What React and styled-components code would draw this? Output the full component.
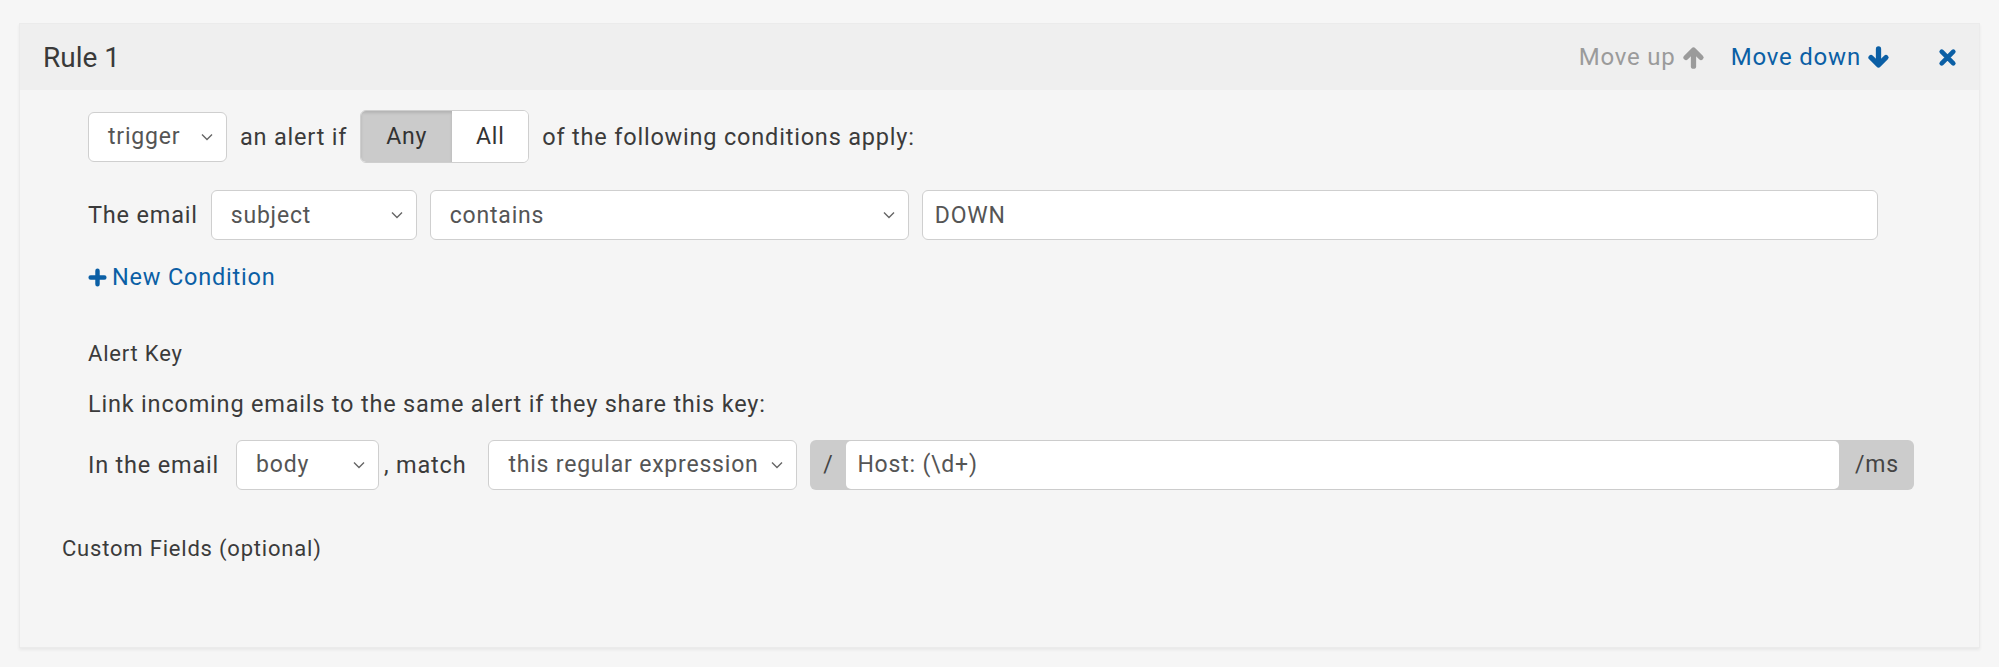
import React from 'react'
import styled, { createGlobalStyle } from 'styled-components'

const GlobalStyle = createGlobalStyle`
    html, body {
        margin: 0;
        padding: 0;
        background: #f6f6f6;
        font-family: Roboto, "Liberation Sans", sans-serif;
        color: #3b3b3b;
        letter-spacing: 0.05em;
    }
`

const Page = styled.div`
    padding: 23px 19px 17px 19px;
`

const Card = styled.div`
    background: #f5f5f5;
    border: 1px solid #ebebeb;
    box-shadow: 0 2px 3px rgba(0, 0, 0, 0.06);
    min-height: 625px;
    box-sizing: border-box;
`

const Header = styled.div`
    display: flex;
    align-items: center;
    height: 66px;
    background: #efefef;
    padding: 0 22px 0 23px;
`

const Title = styled.div`
    flex: 1;
    font-size: 28px;
    letter-spacing: 0;
    color: #3a3a3a;
`

const HeaderAction = styled.a`
    display: flex;
    align-items: center;
    gap: 6px;
    font-size: 24px;
    margin-left: 26px;
    color: ${props => props.disabled ? '#9b9b9b' : '#0b5fa5'};
    cursor: pointer;
    svg {
        width: 23px;
        height: 23px;
    }
`

const CloseButton = styled.a`
    display: flex;
    align-items: center;
    margin-left: 48px;
    color: #0b5fa5;
    svg {
        width: 19px;
        height: 19px;
    }
`

const Body = styled.div`
    padding: 20px 0 0 68px;
    font-size: 23.5px;
`

const Row = styled.div`
    display: flex;
    align-items: center;
    gap: 13px;
    margin: ${props => props.m || '0'};
`

const Text = styled.span`
    margin: ${props => props.m || '0'};
`

const Select = styled.div`
    display: flex;
    align-items: center;
    justify-content: space-between;
    box-sizing: border-box;
    height: 50px;
    width: ${props => props.w}px;
    padding: 0 12px 0 19px;
    background: #fff;
    border: 1px solid #cfcfcf;
    border-radius: 6px;
    color: #555;
    font-size: 23px;
    svg {
        width: 14px;
        height: 14px;
        flex-shrink: 0;
    }
`

const Toggle = styled.div`
    display: flex;
    height: 53px;
    box-sizing: border-box;
    border: 1px solid #cfcfcf;
    border-radius: 6px;
    overflow: hidden;
    background: #fff;
`

const ToggleOption = styled.div`
    display: flex;
    align-items: center;
    justify-content: center;
    width: ${props => props.w}px;
    font-size: 23px;
    color: #333;
    background: ${props => props.active ? '#cbcbcb' : '#fff'};
    box-shadow: ${props => props.active ? 'inset 0 2px 3px rgba(0,0,0,0.12)' : 'none'};
`

const TextInput = styled.div`
    display: flex;
    align-items: center;
    box-sizing: border-box;
    height: 50px;
    width: ${props => props.w}px;
    padding: 0 12px;
    background: #fff;
    border: 1px solid #cfcfcf;
    border-radius: 6px;
    color: #555;
    font-size: 23px;
`

const InputGroup = styled.div`
    display: flex;
    align-items: stretch;
    height: 50px;
    width: 1104px;
    background: #cccccc;
    border-radius: 6px;
    overflow: hidden;
    box-sizing: border-box;
`

const Addon = styled.div`
    display: flex;
    align-items: center;
    justify-content: center;
    width: ${props => props.w}px;
    color: #444;
    font-size: 23px;
`

const GroupInput = styled.div`
    flex: 1;
    display: flex;
    align-items: center;
    margin: 1px 0;
    padding: 0 11px;
    background: #fff;
    border-radius: 5px;
    color: #555;
    font-size: 23px;
`

const AddLink = styled.a`
    display: inline-flex;
    align-items: center;
    gap: 5px;
    color: #0b5fa5;
    font-size: 23.5px;
    cursor: pointer;
    svg {
        width: 19px;
        height: 19px;
    }
`

const Label = styled.div`
    margin: ${props => props.m || '0'};
`

const SubLabel = styled.div`
    font-size: 22px;
    margin: ${props => props.m || '0'};
`

const Chevron = () => (
    <svg viewBox="0 0 14 14" fill="none" stroke="#666" strokeWidth="1.4">
        <path d="M2 4.5 L7 9.5 L12 4.5" />
    </svg>
)

const ArrowIcon = ({ up }) => (
    <svg viewBox="0 0 20 20" fill="none" stroke="currentColor" strokeWidth="4.6"
        strokeLinecap="round" strokeLinejoin="round"
        style={up ? { transform: 'rotate(180deg)' } : undefined}>
        <path d="M10 2.5 L10 15" />
        <path d="M3.5 10 L10 16.5 L16.5 10" />
    </svg>
)

const CrossIcon = () => (
    <svg viewBox="0 0 18 18" fill="none" stroke="currentColor" strokeWidth="4.4" strokeLinecap="round">
        <path d="M3.5 3.5 L14.5 14.5 M14.5 3.5 L3.5 14.5" />
    </svg>
)

const PlusIcon = () => (
    <svg viewBox="0 0 18 18" fill="none" stroke="currentColor" strokeWidth="4.2" strokeLinecap="round">
        <path d="M9 2.5 L9 15.5 M2.5 9 L15.5 9" />
    </svg>
)

function Dropdown({ value, w }) {
    return (
        <Select w={w}>
            <span>{value}</span>
            <Chevron />
        </Select>
    )
}

export default function App() {
    return (
        <Page>
            <GlobalStyle />
            <Card>
                <Header>
                    <Title>Rule 1</Title>
                    <HeaderAction disabled>Move up <ArrowIcon up /></HeaderAction>
                    <HeaderAction>Move down <ArrowIcon /></HeaderAction>
                    <CloseButton><CrossIcon /></CloseButton>
                </Header>
                <Body>
                    <Row m="0 0 27px 0">
                        <Dropdown value="trigger" w={139} />
                        <span>an alert if</span>
                        <Toggle>
                            <ToggleOption active w={91}>Any</ToggleOption>
                            <ToggleOption w={76}>All</ToggleOption>
                        </Toggle>
                        <span>of the following conditions apply:</span>
                    </Row>
                    <Row>
                        <span>The email</span>
                        <Dropdown value="subject" w={206} />
                        <Dropdown value="contains" w={479} />
                        <TextInput w={956}>DOWN</TextInput>
                    </Row>
                    <Label m="23px 0 0 0">
                        <AddLink><PlusIcon /> New Condition</AddLink>
                    </Label>
                    <SubLabel m="48px 0 0 0">Alert Key</SubLabel>
                    <Label m="24px 0 0 0">Link incoming emails to the same alert if they share this key:</Label>
                    <Row m="22px 0 0 0">
                        <Text m="0 4px 0 0">In the email</Text>
                        <Dropdown value="body" w={143} />
                        <Text m="0 9px 0 -8px">, match</Text>
                        <Dropdown value="this regular expression" w={309} />
                        <InputGroup>
                            <Addon w={36}>/</Addon>
                            <GroupInput>Host: (\d+)</GroupInput>
                            <Addon w={75}>/ms</Addon>
                        </InputGroup>
                    </Row>
                    <SubLabel m="46px 0 0 -26px">Custom Fields (optional)</SubLabel>
                </Body>
            </Card>
        </Page>
    )
}
